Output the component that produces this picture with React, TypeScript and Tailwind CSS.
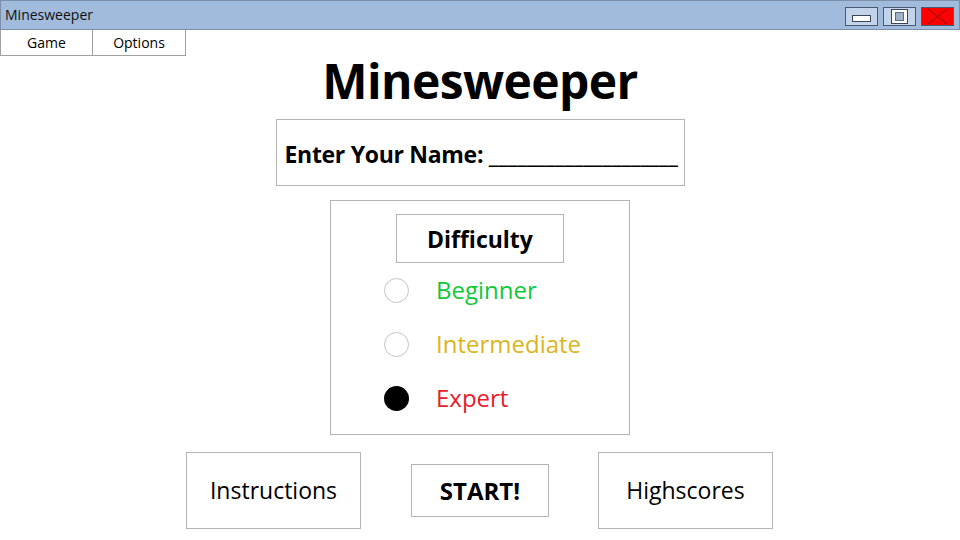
const font = { fontFamily: '"Open Sans", "Noto Sans", sans-serif' };

function WinButton({ kind }: { kind: "min" | "max" | "close" }) {
  if (kind === "close") {
    return (
      <div className="flex h-[19px] w-[33px] items-center justify-center border border-[#4a5a70] bg-[#ff0000]">
        <svg width="31" height="17" viewBox="0 0 31 17">
          <path d="M6 1 L25 16 M25 1 L6 16" stroke="#8a1010" strokeWidth="1" />
        </svg>
      </div>
    );
  }
  return (
    <div className="flex h-[19px] w-[33px] items-center justify-center border border-[#4a5a70] bg-[#c2d3ea]">
      {kind === "min" ? (
        <div className="mt-[4px] h-[7px] w-[19px] border border-[#3a4658] bg-white" />
      ) : (
        <div className="flex h-[15px] w-[17px] items-center justify-center border border-[#3a4658] bg-white">
          <div className="h-[9px] w-[9px] border border-[#5a6a80] bg-[#9fb3cc]" />
        </div>
      )}
    </div>
  );
}

function Radio({ checked, label, color }: { checked?: boolean; label: string; color: string }) {
  return (
    <div className="flex h-[54px] items-center">
      <div
        className={
          checked
            ? "ml-[53px] h-[25px] w-[25px] rounded-full bg-black"
            : "ml-[53px] h-[25px] w-[25px] rounded-full border border-[#c4c4c4] bg-white"
        }
      />
      <span className={"ml-[27px] text-[24px] " + color}>{label}</span>
    </div>
  );
}

export default function App() {
  return (
    <div className="h-[540px] w-[960px] overflow-hidden bg-white text-black" style={font}>
      <div className="flex h-[30px] items-center justify-between border border-[#7d8fa8] bg-[#a0bbdc] pl-[4px] pr-[5px]">
        <span className="text-[14px] leading-none text-[#111]">Minesweeper</span>
        <div className="flex gap-[5px] pt-[2px]">
          <WinButton kind="min" />
          <WinButton kind="max" />
          <WinButton kind="close" />
        </div>
      </div>
      <div className="flex h-[26px]">
        <div className="flex w-[93px] items-center justify-center border border-t-0 border-[#a0a0a0] text-[14px]">Game</div>
        <div className="flex w-[93px] items-center justify-center border border-l-0 border-t-0 border-[#a0a0a0] text-[14px]">Options</div>
      </div>
      <div className="flex flex-col items-center">
        <h1 className="mt-[-10px] mb-[4px] h-[69px] text-[48px] font-bold leading-[69px] tracking-[-0.6px]">Minesweeper</h1>
        <div className="flex h-[67px] w-[409px] items-center border border-[#b4b4b4] pl-[8px] pt-[4px]">
          <span className="text-[23px] font-bold tracking-[-0.3px]">
            Enter Your Name: <span className="tracking-normal">____________________</span>
          </span>
        </div>
        <div className="mt-[14px] h-[235px] w-[300px] border border-[#b4b4b4]">
          <div className="mx-auto mt-[13px] flex h-[49px] w-[168px] items-center justify-center border border-[#b4b4b4] pt-[2px] text-[23px] font-bold">
            Difficulty
          </div>
          <Radio label="Beginner" color="text-[#10c83a]" />
          <Radio label="Intermediate" color="text-[#dcb421]" />
          <Radio checked label="Expert" color="text-[#e4202a]" />
        </div>
        <div className="mt-[17px] flex items-center pr-[1px]">
          <div className="flex h-[77px] w-[175px] items-center justify-center border border-[#b4b4b4] text-[23px]">Instructions</div>
          <div className="ml-[50px] mr-[49px] flex h-[53px] w-[138px] items-center justify-center border border-[#b4b4b4] text-[24px] font-bold">START!</div>
          <div className="flex h-[77px] w-[175px] items-center justify-center border border-[#b4b4b4] text-[23px]">Highscores</div>
        </div>
      </div>
    </div>
  );
}
